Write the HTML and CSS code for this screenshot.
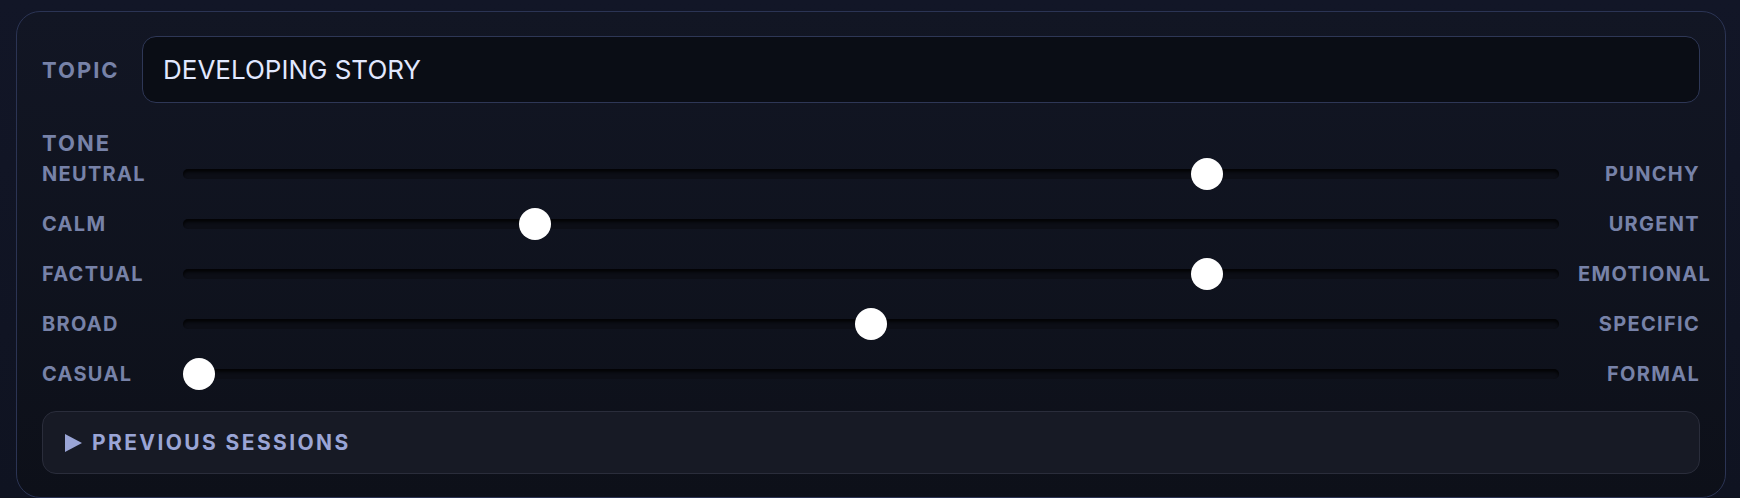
FILE: index.html
```html
<!DOCTYPE html>
<html lang="en">

<head>
    <meta charset="UTF-8">
    <meta name="viewport" content="width=device-width, initial-scale=1.0">
    <title>Tone Controls</title>
    <link rel="stylesheet" href="styles.css">
</head>

<body>
    <div class="panel">
        <div class="topic-row">
            <label class="field-label topic-label" for="topic">TOPIC</label>
            <input type="text" id="topic" class="topic-input" value="DEVELOPING STORY">
        </div>

        <div class="tone">
            <div class="field-label tone-title">TONE</div>

            <div class="tone-row">
                <span class="tone-label">NEUTRAL</span>
                <input type="range" class="tone-slider" min="0" max="100" value="75">
                <span class="tone-label right">PUNCHY</span>
            </div>
            <div class="tone-row">
                <span class="tone-label">CALM</span>
                <input type="range" class="tone-slider" min="0" max="100" value="25">
                <span class="tone-label right">URGENT</span>
            </div>
            <div class="tone-row">
                <span class="tone-label">FACTUAL</span>
                <input type="range" class="tone-slider" min="0" max="100" value="75">
                <span class="tone-label right">EMOTIONAL</span>
            </div>
            <div class="tone-row">
                <span class="tone-label">BROAD</span>
                <input type="range" class="tone-slider" min="0" max="100" value="50">
                <span class="tone-label right">SPECIFIC</span>
            </div>
            <div class="tone-row">
                <span class="tone-label">CASUAL</span>
                <input type="range" class="tone-slider" min="0" max="100" value="0">
                <span class="tone-label right">FORMAL</span>
            </div>
        </div>

        <details class="sessions">
            <summary>
                <svg class="caret" width="17" height="18" viewBox="0 0 17 18">
                    <path d="M0 0 L17 9 L0 18 Z" fill="currentColor"></path>
                </svg>
                <span>PREVIOUS SESSIONS</span>
            </summary>
        </details>
    </div>
</body>

</html>
```

FILE: styles.css
```css
body {
    font-family: Inter, "Noto Sans", sans-serif;
    margin: 0;
    padding: 0;
    background: linear-gradient(180deg, #121627, #0f1321);
    height: 498px;
    overflow: hidden;
}

.panel {
    margin: 11px 14px 0 16px;
    padding: 24px 25px 23px;
    border: 1px solid #2b3454;
    border-radius: 24px;
    background: linear-gradient(180deg, #121624, #0d1019);
}

.field-label {
    color: #7782a8;
    font-size: 22px;
    font-weight: 700;
    letter-spacing: 2px;
}

.topic-row {
    display: flex;
    align-items: center;
    height: 67px;
}

.topic-label {
    width: 100px;
    flex: none;
}

.topic-input {
    flex: 1;
    height: 67px;
    box-sizing: border-box;
    padding: 0 20px;
    border: 1px solid #2e3756;
    border-radius: 14px;
    background-color: #0a0d15;
    color: #e1e8ff;
    font-family: Inter, "Noto Sans", sans-serif;
    font-size: 26px;
    letter-spacing: 0;
    outline: none;
}

.tone {
    margin-top: 28px;
}

.tone-title {
    line-height: 24px;
    margin-bottom: 3px;
}

.tone-row {
    display: flex;
    align-items: center;
    gap: 19px;
    height: 32px;
    margin-bottom: 18px;
}

.tone-row:last-child {
    margin-bottom: 0;
}

.tone-label {
    width: 122px;
    flex: none;
    color: #7782a8;
    font-size: 20px;
    font-weight: 700;
    letter-spacing: 1.3px;
    white-space: nowrap;
}

.tone-label.right {
    text-align: right;
}

.tone-slider {
    -webkit-appearance: none;
    appearance: none;
    flex: 1;
    min-width: 0;
    height: 32px;
    margin: 0;
    background: transparent;
    outline: none;
}

.tone-slider::-webkit-slider-runnable-track {
    height: 10px;
    border-radius: 5px;
    background-color: #0c0e16;
    box-shadow: inset 0 3px 3px rgba(0, 0, 0, 0.75);
}

.tone-slider::-webkit-slider-thumb {
    -webkit-appearance: none;
    width: 32px;
    height: 32px;
    margin-top: -11px;
    border: none;
    border-radius: 50%;
    background-color: #ffffff;
    cursor: pointer;
}

.sessions {
    margin-top: 21px;
    border: 1px solid #2a2d3b;
    border-radius: 14px;
    background-color: #171a25;
}

.sessions summary {
    display: flex;
    align-items: center;
    gap: 10px;
    height: 61px;
    padding: 0 22px;
    list-style: none;
    color: #9aa5d6;
    font-size: 21px;
    font-weight: 700;
    letter-spacing: 2.4px;
    cursor: pointer;
}

.sessions summary::-webkit-details-marker {
    display: none;
}

.caret {
    flex: none;
}
```
